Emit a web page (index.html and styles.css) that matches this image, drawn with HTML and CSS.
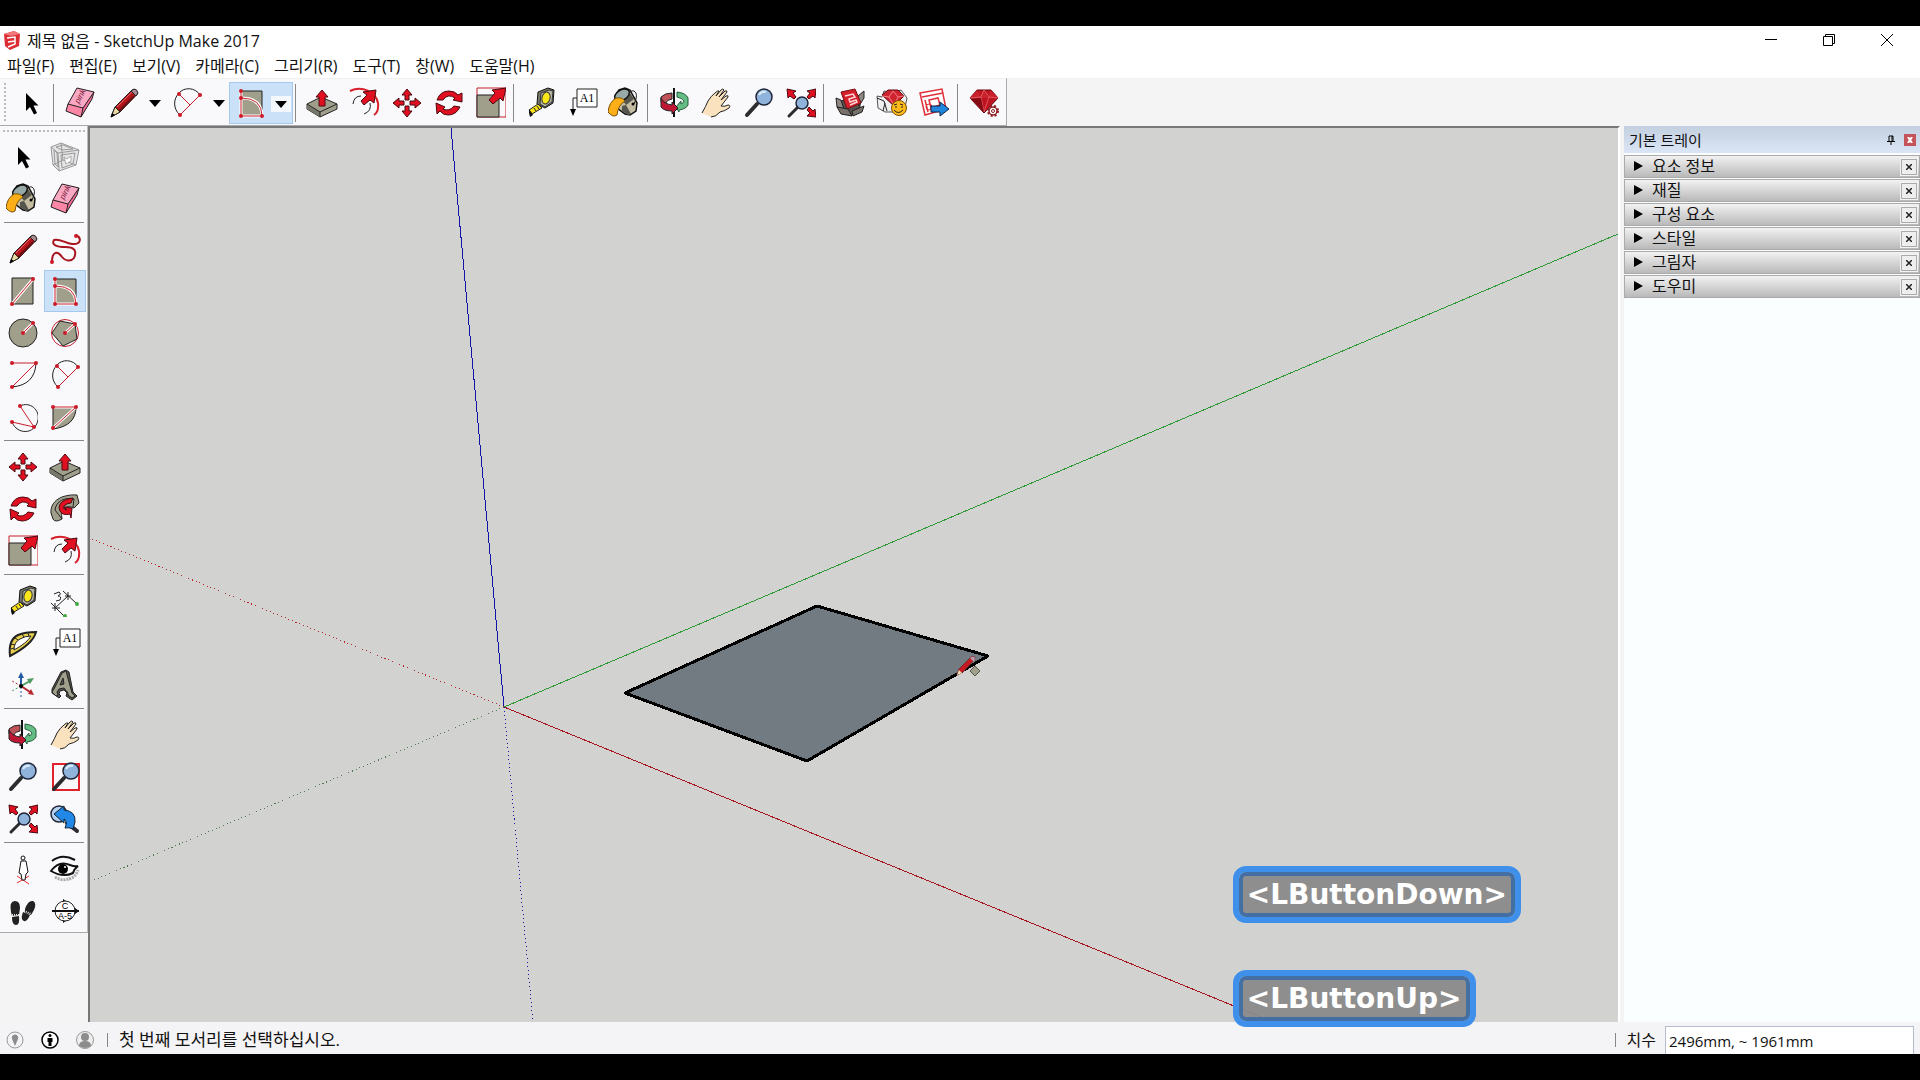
FILE: index.html
```html
<!DOCTYPE html>
<html lang="ko">
<head>
    <meta charset="utf-8">
    <title>제목 없음 - SketchUp Make 2017</title>
    <link rel="stylesheet" href="styles.css">
</head>
<body>

<!-- icon set, shared by both toolbars -->
<svg class="icon-defs" aria-hidden="true">
    <symbol id="select" viewBox="0 0 32 32"><path d="M12 6v18l4-4 4 7.500 3-1.500-3.500-7.500h5z"/></symbol>
    <symbol id="component" viewBox="0 0 32 32">
        <path d="M2 6l10-4 18 7-3 15-17 6-6-6z" fill="#e4e4e6" stroke="#9a9a9a"/>
        <path d="M2 6l7 6 21-3M9 12l1 18M12 2l2 17-10 5M14 19l13 5M5 9l3 3 1 14-3-3zM12 14l14-2-2 11-11 4zM14 4l10 4-11 1-6-3z" fill="none" stroke="#9a9a9a"/>
        <path d="M15 16l3 2 4-3v5l-5 3z" fill="#fff" stroke="#aaa"/>
    </symbol>
    <symbol id="eraser" viewBox="0 0 32 32">
        <path d="M13 1l17 4-2 7-11 18-15-6 2-7z" fill="#f06a94"/>
        <path d="M13 1l17 4-11 16-15-4z" fill="#f9a9c3"/>
        <path d="M4 17l15 4-2 9-15-6z" fill="#fb86a6"/>
        <path d="M13 1l17 4-2 7-11 18-15-6 2-7zM4 17l15 4 11-16M19 21l-2 9" fill="none" stroke="#222"/>
        <text x="15" y="17" transform="rotate(-62 15 17)" class="pink-mark">pink</text>
    </symbol>
    <symbol id="pencil" viewBox="0 0 32 32">
        <path d="M4 30l4-10L25 3q2-1 4 .5 2 2 1 4L13 25z" fill="#b5161c" stroke="#222"/>
        <path d="M10 20L26 4" stroke="#e8646a" stroke-width="1"/>
        <path d="M12 24l15-15" stroke="#6e0d12" stroke-width="2"/>
        <path d="M4 30l4-10 5 5z" fill="#e9d9a5" stroke="#222"/>
        <path d="M4 30l1-4 3 2z"/>
        <path d="M24 4l5 5 2-3q-1-4-4-4z" fill="#a78b91" stroke="#222"/>
    </symbol>
    <symbol id="freehand" viewBox="0 0 32 32">
        <path d="M27 2C33 5 32 12 23 11 16 10 10 5 5 7 2 12 8 14 16 14 26 14 28 18 25 25 22 29 16 28 13 24 8 17 3 19 3 29" fill="none" stroke="#a8141f" stroke-width="2"/>
        <circle cx="27" cy="3" r="2" class="node"/><circle cx="3" cy="29" r="2" class="node"/>
    </symbol>
    <symbol id="rectangle" viewBox="0 0 32 32">
        <path d="M6 3h21v26h-21z" class="stone"/>
        <path d="M6 29l21-25" class="halo"/><path d="M6 29l21-25" class="red"/>
        <circle cx="27" cy="4" r="2" class="node"/><circle cx="6" cy="29" r="2" class="node"/>
    </symbol>
    <symbol id="rotated" viewBox="0 0 32 32">
        <path d="M6 4h21v25h-21z" class="stone"/>
        <path d="M6 4v25h21Q27 11 6 11" class="halo"/><path d="M6 4v25h21Q27 11 6 11" class="red"/>
        <circle cx="6" cy="4" r="2" class="node"/><circle cx="6" cy="11" r="2" class="node"/><circle cx="6" cy="29" r="2" class="node"/><circle cx="27" cy="29" r="2" class="node"/>
    </symbol>
    <symbol id="circle" viewBox="0 0 32 32">
        <circle cx="17" cy="16" r="14" class="stone"/>
        <path d="M17 16l10-10" class="halo"/><path d="M17 16l10-10" class="red"/>
        <circle cx="17" cy="16" r="2" class="node"/><circle cx="27" cy="6" r="2" class="node"/>
    </symbol>
    <symbol id="polygon" viewBox="0 0 32 32">
        <circle cx="16" cy="16" r="13.500" class="red"/>
        <path d="M11 4l15 3 2 15-14 7-11-13z" class="stone"/>
        <path d="M16 16l10-9" class="halo"/><path d="M16 16l10-9" class="red"/>
        <circle cx="16" cy="16" r="2" class="node"/><circle cx="26" cy="7" r="2" class="node"/>
    </symbol>
    <symbol id="arc" viewBox="0 0 32 32">
        <path d="M30 4Q29 26 6 28" class="ink"/>
        <path d="M6 4h24L6 28" class="red"/>
        <circle cx="6" cy="4" r="2" class="node"/><circle cx="30" cy="4" r="2" class="node"/><circle cx="6" cy="28" r="2" class="node"/>
    </symbol>
    <symbol id="arc2" viewBox="0 0 32 32">
        <path d="M29 8C24 0 13 0 8 6 2 12 2 22 9 28" class="ink"/>
        <path d="M29 8L9 28M8 7l11 11" class="red"/>
        <circle cx="8" cy="7" r="2" class="node"/><circle cx="29" cy="8" r="2" class="node"/><circle cx="9" cy="28" r="2" class="node"/>
    </symbol>
    <symbol id="arc3" viewBox="0 0 32 32">
        <path d="M14 5C24 0 34 9 32 19 29 34 11 34 6 21" class="ink"/>
        <path d="M14 5l14 21-22-5" class="red"/>
        <circle cx="14" cy="5" r="2" class="node"/><circle cx="6" cy="21" r="2" class="node"/><circle cx="28" cy="26" r="2" class="node"/>
    </symbol>
    <symbol id="pie" viewBox="0 0 32 32">
        <path d="M4 6h23Q27 25 4 28z" class="stone"/>
        <path d="M4 6h23L4 27" class="halo"/><path d="M4 6h23L4 27" class="red"/>
        <circle cx="4" cy="6" r="2" class="node"/><circle cx="27" cy="6" r="2" class="node"/><circle cx="4" cy="27" r="2" class="node"/>
    </symbol>
    <symbol id="move" viewBox="0 0 32 32">
        <path d="M17 2l5 6h-3v5h-4V8h-3zM17 30l5-6h-3v-5h-4v5h-3zM3 16l6-5v3h5v4H9v3zM31 16l-6-5v3h-5v4h5v3z" class="arrow"/>
    </symbol>
    <symbol id="pushpull" viewBox="0 0 32 32">
        <path d="M1 17l14-7 16 7v5l-17 8L1 22z" class="stone"/>
        <path d="M1 18v4l13 8v-5z" fill="#77776b"/>
        <path d="M1 17l13 8 17-8M14 25v5" class="ink"/>
        <path d="M16 3l6 7h-3v9h-6v-9h-3z" class="arrow"/>
    </symbol>
    <symbol id="rotate" viewBox="0 0 32 32">
        <path d="M5 13Q8 4 17 4 23 4 26 8l4-2v9l-9-2 2-2Q16 6 11 13z" class="arrow"/>
        <path d="M28 20Q24 28 16 28 11 28 8 24l-3 3-1-11 9 4-2 2Q17 25 22 19z" class="arrow"/>
    </symbol>
    <symbol id="followme" viewBox="0 0 32 32">
        <path d="M2 20C1 8 13 1 28 2l2 8-5 5C17 11 11 16 13 26q-7 4-9 0z" class="stone"/>
        <path d="M6 17C7 8 16 4 25 6l-1 8M13 26q-3-4-7-9" class="ink"/>
        <path d="M24 5C13 6 8 12 11 18q3 5 10 3l1 4 1-10-8-1 3 3q-5-1-3-4 3-3 7-3z" class="arrow"/>
    </symbol>
    <symbol id="scale" viewBox="0 0 32 32">
        <path d="M3 1h29v29H3z" class="red"/><path d="M3 8h22v22H3z" class="stone"/>
        <path d="M32 1l-3 13-3-3-7 6-4-4 6-7-3-3z" class="arrow"/>
    </symbol>
    <symbol id="offset" viewBox="0 0 32 32">
        <path d="M2 4C14-2 28 5 30 16q1 9-4 12" fill="none" stroke="#d8202a" stroke-width="2"/>
        <path d="M5 17Q6 9 13 9M22 16q2 8-6 11" class="ink"/>
        <path d="M28 3l-2 13-4-3-6 5-3-4 6-6-4-3z" class="arrow"/>
    </symbol>
    <symbol id="tape" viewBox="0 0 32 32">
        <path d="M14 5l10-4 6 2-1 13-8 5-8-4z" fill="#77776b" stroke="#111"/>
        <path d="M17 6l8-3 4 1-1 11-7 5-5-3z" fill="#b7b6a4" stroke="#333"/>
        <ellipse cx="22" cy="11" rx="4" ry="6" transform="rotate(15 22 11)" fill="#fbe61c" stroke="#333"/>
        <path d="M5 23l9-6 4 4-10 6z" fill="#f7e01a" stroke="#222"/><path d="M5 22l4 6-3 2-1-4z" fill="#111"/>
        <path d="M10 21l2 3M13 19l2 3" class="ink"/>
    </symbol>
    <symbol id="dimension" viewBox="0 0 32 32">
        <path d="M6 23L19 11M2 18l14 14M14 6l13 12M3 23h8M16 11h6M6 18v8M19 7v8" class="ink"/>
        <path d="M5 9l5-2q3 2-1 4 4 0 2 4l-4 1" class="ink"/>
        <circle cx="16" cy="31" r="2" fill="#4a4"/><circle cx="28" cy="19" r="2" fill="#4a4"/>
    </symbol>
    <symbol id="protractor" viewBox="0 0 32 32">
        <path d="M4 29Q2 13 12 8 19 5 30 5q-3 12-26 24z" fill="#e8cf4e" stroke="#222" stroke-width="2"/>
        <path d="M8 23Q8 15 14 12q5-3 11-3-4 7-17 14z" fill="#fff" stroke="#222"/>
        <path d="M5 22l3-1M5 17l4 1M9 11l3 2M16 7l2 3M22 6l1 3" class="ink"/>
    </symbol>
    <symbol id="label" viewBox="0 0 32 32">
        <path d="M11 2h20v18H11z" fill="#fff" stroke="#222"/><path d="M11 11H7v13" class="ink"/><path d="M4 22h6l-3 7z"/>
        <text x="21" y="15" class="icon-text">A1</text>
    </symbol>
    <symbol id="axes" viewBox="0 0 32 32">
        <path d="M15 19V7" stroke="#235ba2" stroke-width="2"/><path d="M15 3l3 6h-6z" fill="#235ba2"/>
        <path d="M15 17l9-5" stroke="#4d9a5f" stroke-width="2"/><path d="M28 9l-7 1 3 5z" fill="#4d9a5f"/>
        <path d="M15 17l9 6" stroke="#b7272d" stroke-width="2"/><path d="M28 26l-3-6-3 5z" fill="#b7272d"/>
        <path d="M15 17L6 12" stroke="#b7272d" stroke-dasharray="2 2"/><path d="M15 17l-9 5" stroke="#4d9a5f" stroke-dasharray="2 2"/><path d="M15 18v10" stroke="#235ba2" stroke-dasharray="2 2"/>
        <circle cx="15" cy="17" r="2"/>
    </symbol>
    <symbol id="text3d" viewBox="0 0 32 32">
        <path d="M3 20L12 3l5-2 3 2 4 20 4 4-5 4-6-4 1-3-3-3-4 1-1 3 2 2-2 2-7-5z" fill="#55554c" stroke="#222"/>
        <path d="M5 20L13 4l4-2 6 22 3 3-3 2-4-3v-2l-4-5-5 1-2 3 1 3-2 1-4-4zM11 16l4-1-1-6z" class="stone"/>
    </symbol>
    <symbol id="orbit" viewBox="0 0 32 32">
        <path d="M3 15V10Q7 6 14 6v6q-6 1-6 4z" fill="#bf5358" stroke="#222"/>
        <path d="M19 5q9 1 11 6v7q-2 4-9 5v2l-3-5 5-6v3q3-1 3-3-2-3-7-4z" fill="#65bd86" stroke="#255c39"/>
        <path d="M16 1v29" stroke="#111" stroke-width="2"/>
        <path d="M3 11v9q3 4 11 4v3l6-6-6-6v3Q6 17 3 11z" fill="#bd1733" stroke="#222"/>
    </symbol>
    <symbol id="pan" viewBox="0 0 32 32">
        <path d="M2 26Q6 19 8 14 11 9 15 6q3-3 4-2l-3 5 5-6q2-2 3 0l-5 7 6-6q2-1 2 1l-6 8 5-4q3-1 2 1l-7 9q4 1 7-1 3 0 1 3-4 3-9 4-4 5-9 5z" fill="#f9e2bd"/>
        <path d="M2 26Q6 19 8 14 11 9 15 6q3-3 4-2l-3 5 5-6q2-2 3 0l-5 7 6-6q2-1 2 1l-6 8 5-4q3-1 2 1l-7 9q4 1 7-1 3 0 1 3-4 3-9 4-4 5-9 5" class="ink"/>
    </symbol>
    <symbol id="zoom" viewBox="0 0 32 32">
        <path d="M5 28l10-11" stroke="#2c2c2e" stroke-width="4" stroke-linecap="round"/>
        <circle cx="22" cy="10" r="8" fill="#8fb3da" stroke="#20263a" stroke-width="1.500"/>
        <path d="M17 8q2-4 7-3" fill="none" stroke="#dcebfa" stroke-width="2"/>
    </symbol>
    <symbol id="zoomwin" viewBox="0 0 32 32">
        <path d="M4 3h26v26H4z" fill="none" stroke="#e0232b" stroke-width="2"/><use href="#zoom"/>
    </symbol>
    <symbol id="extents" viewBox="0 0 32 32">
        <path d="M5 29l9-9" stroke="#2c2c2e" stroke-width="3" stroke-linecap="round"/>
        <circle cx="18" cy="16" r="6" fill="#8fb3da" stroke="#20263a" stroke-width="1.500"/>
        <path d="M3 2l9 2-3 2 3 4-2 2-4-3-2 2zM32 2l-9 2 3 2-3 4 2 2 4-3 2 2zM32 30l-9-1 3-3-3-3 2-3 4 4 2-2z" class="arrow"/>
    </symbol>
    <symbol id="previous" viewBox="0 0 32 32">
        <circle cx="10" cy="11" r="8" fill="#b4d2ef" stroke="#20263a" stroke-width="1.500"/>
        <path d="M18 20l10 8" stroke="#2c2c2e" stroke-width="4" stroke-linecap="round"/>
        <path d="M5 11l10-8v4q12 1 11 12l-2 7q-4-2-8-1 3-7-1-9v4z" fill="#2188e8" stroke="#123"/>
    </symbol>
    <symbol id="position" viewBox="0 0 32 32">
        <path d="M11 23l12 8M11 30l12-7" stroke="#e33" fill="none"/>
        <circle cx="17" cy="5" r="2" fill="#fff" stroke="#111"/>
        <path d="M15 8h5l2 11-2 2-1 6h-3l-1-6-2-1z" fill="#fff" stroke="#111"/>
    </symbol>
    <symbol id="look" viewBox="0 0 32 32">
        <path d="M20 26q7-2 9-9M6 24q8 5 15 1" stroke="#aaa" stroke-width="3" stroke-dasharray="2 1" fill="none"/>
        <path d="M3 8Q13 0 26 7" stroke="#111" stroke-width="2" fill="none"/>
        <path d="M2 18Q10 7 21 12q5 2 8 1-4 3-5 7-10 5-22-2z" fill="#fff" stroke="#111" stroke-width="2"/>
        <circle cx="14" cy="16" r="5"/><circle cx="16" cy="14" r="1" fill="#fff"/>
    </symbol>
    <symbol id="walk" viewBox="0 0 32 32">
        <path d="M5 17Q3 6 9 6q5 0 5 7l-1 7-7 1z" fill="#222"/><path d="M6 22l7-1q1 9-3 9-4 0-4-8z" fill="#222"/>
        <path d="M19 14q3-9 8-8 4 2 1 9l-3 5-6-2z" fill="#222"/><path d="M17 17l7 3q-3 7-6 6-4-1-1-9z" fill="#222"/>
        <path d="M6 20h7M18 16l7 3" stroke="#ddd" stroke-width="2" stroke-dasharray="1 1"/>
    </symbol>
    <symbol id="section" viewBox="0 0 32 32">
        <path d="M14 4l16 12-16 12z"/><circle cx="16" cy="16" r="10" fill="#fff" stroke="#222"/><path d="M3 16h27" stroke="#111" stroke-width="2"/>
        <text x="16" y="14" class="icon-small">C</text><text x="16" y="24" class="icon-small">A-5</text>
    </symbol>
    <symbol id="paint" viewBox="0 0 32 32">
        <path d="M7 9l4-6 6-2 5 2 7 13-1 8-6 4-5-1-8-6z" fill="#c5bda2" stroke="#111" stroke-width="1.500"/>
        <path d="M13 11l9-5 4 6-8 6zM14 19l4-1 5 9-3 1-6-4z" fill="#55554d"/>
        <ellipse cx="14" cy="8" rx="8" ry="5" transform="rotate(-30 14 8)" fill="#97aaa8" stroke="#111" stroke-width="1.500"/>
        <path d="M21 8q1-5 5-4 5 3 0 13" class="ink"/><circle cx="25" cy="17" r="1.500"/>
        <path d="M8 11Q1 15 0 25q5 6 9 3 1-10 8-14-3-4-9-3z" fill="#fbae18" stroke="#7a5208"/>
    </symbol>
    <symbol id="warehouse" viewBox="0 0 32 32">
        <path d="M6 14l20-3v12l-8 5-11-2z" fill="#57504d" stroke="#222"/>
        <path d="M2 11l5 2 3 9-7-2zM24 9l6-5v7l-5 8z" fill="#8f8782" stroke="#222"/>
        <path d="M7 5l14-3 6 14-14 6z" fill="#d5202b" stroke="#7a0d14"/>
        <path d="M11 9l8-2 2 3-6 2 1 3 6-2 1 2-7 3" fill="none" stroke="#fbd5d7" stroke-width="1.500"/>
        <path d="M3 20l11 2 4 7-11-2zM18 24l12-5-2 6-9 4z" fill="#77706b" stroke="#222"/>
    </symbol>
    <symbol id="extension" viewBox="0 0 32 32">
        <path d="M1 9l5 1 2-6 8 2 9-3 6 8-3 14H9L2 21z" fill="#f0f0f0" stroke="#555"/>
        <path d="M6 8l6-5h10l6 6-10 10z" fill="#cf2430" stroke="#5c0b11"/><path d="M6 9l7 1 4-6 5 6 6-1M13 10l5 8 4-8" fill="none" stroke="#f27d83"/>
        <path d="M1 11l7 3 3 10M9 16l-2 8" class="ink"/>
        <circle cx="23" cy="21" r="7.500" fill="#fcbb1b" stroke="#7e5000"/><path d="M18 18l3-1M24 17l3 1M18 23q4 5 9 0" class="ink"/><path d="M19 20h2M25 20h2" class="ink"/>
    </symbol>
    <symbol id="layout" viewBox="0 0 32 32">
        <path d="M2 6l22-4 4 20-21 6z" fill="#fff" stroke="#e1303a" stroke-width="1.500"/>
        <path d="M4 10l21-4M7 13l3 12M11 13l9-2 2 7-9 3z" fill="none" stroke="#e1303a" stroke-width="1.500"/><circle cx="11" cy="20" r="3" fill="none" stroke="#e1303a"/>
        <path d="M13 19h9v-4l9 7-9 7v-4h-9z" fill="#2186dd" stroke="#124"/>
    </symbol>
    <symbol id="ruby" viewBox="0 0 32 32">
        <path d="M2 11l7-8h14l7 8-14 15z" fill="#bd1420" stroke="#5c0b11"/>
        <path d="M9 3l4 7 3-7 4 7 3-7 7 8H2zM13 10l3 15" fill="#c9222c"/><path d="M2 11l11-1 3-7 5 7 9 1M13 10l3 15 5-15" fill="none" stroke="#e0565d"/>
        <path d="M13 11l3 14-13-13z" fill="#850b14"/>
        <circle cx="25" cy="24" r="4" fill="#fff" stroke="#8e1c22" stroke-width="1.500"/><circle cx="25" cy="24" r="5" fill="none" stroke="#8e1c22" stroke-width="2" stroke-dasharray="2 2"/><circle cx="25" cy="24" r="1.500" fill="none" stroke="#8e1c22"/>
    </symbol>
</svg>

<header>
    <div class="title-bar">
        <svg class="app-logo" viewBox="0 0 18 20" aria-hidden="true">
            <path d="M1 4L11 1l6 3-1 12-9 4-5-4z" fill="#dc2d34"/><path d="M1 4l10-3 6 3-9 2z" fill="#f2777a"/>
            <path d="M4 8l8-1v7l-7 3M5 12l7-1" fill="none" stroke="#fff" stroke-width="1.500"/>
        </svg>
        <h1>제목 없음 - SketchUp Make 2017</h1>
        <div class="window-controls">
            <button aria-label="최소화"><svg viewBox="0 0 12 12"><path d="M0 5.500h12"/></svg></button>
            <button aria-label="이전 크기로"><svg viewBox="0 0 12 12"><path d="M.5 2.500h9v9h-9zM2.500 2V.5h9v9H10"/></svg></button>
            <button aria-label="닫기"><svg viewBox="0 0 12 12"><path d="M0 0l12 12M12 0L0 12"/></svg></button>
        </div>
    </div>
    <nav class="menu-bar">
        <button>파일(F)</button>
        <button>편집(E)</button>
        <button>보기(V)</button>
        <button>카메라(C)</button>
        <button>그리기(R)</button>
        <button>도구(T)</button>
        <button>창(W)</button>
        <button>도움말(H)</button>
    </nav>
</header>

<div class="toolbar-row">
    <div class="toolbar">
        <span class="grip"></span>
        <button class="tool" aria-label="선택"><svg><use href="#select"/></svg></button>
        <span class="divider"></span>
        <button class="tool" aria-label="지우개"><svg><use href="#eraser"/></svg></button>
        <div class="split">
            <button class="tool" aria-label="선"><svg><use href="#pencil"/></svg></button>
            <button class="more" aria-label="선 도구 더 보기"></button>
        </div>
        <div class="split">
            <button class="tool" aria-label="호"><svg><use href="#arc2"/></svg></button>
            <button class="more" aria-label="호 도구 더 보기"></button>
        </div>
        <div class="split active">
            <button class="tool" aria-label="회전된 직사각형"><svg><use href="#rotated"/></svg></button>
            <button class="more" aria-label="도형 더 보기"></button>
        </div>
        <span class="divider"></span>
        <button class="tool" aria-label="밀기/끌기"><svg><use href="#pushpull"/></svg></button>
        <button class="tool" aria-label="오프셋"><svg><use href="#offset"/></svg></button>
        <button class="tool" aria-label="이동"><svg><use href="#move"/></svg></button>
        <button class="tool" aria-label="회전"><svg><use href="#rotate"/></svg></button>
        <button class="tool" aria-label="배율"><svg><use href="#scale"/></svg></button>
        <span class="divider"></span>
        <button class="tool" aria-label="줄자"><svg><use href="#tape"/></svg></button>
        <button class="tool" aria-label="텍스트"><svg><use href="#label"/></svg></button>
        <button class="tool" aria-label="페인트 통"><svg><use href="#paint"/></svg></button>
        <span class="divider"></span>
        <button class="tool" aria-label="궤도"><svg><use href="#orbit"/></svg></button>
        <button class="tool" aria-label="이동 보기"><svg><use href="#pan"/></svg></button>
        <button class="tool" aria-label="확대/축소"><svg><use href="#zoom"/></svg></button>
        <button class="tool" aria-label="범위 확대/축소"><svg><use href="#extents"/></svg></button>
        <span class="divider"></span>
        <button class="tool" aria-label="3D Warehouse"><svg><use href="#warehouse"/></svg></button>
        <button class="tool" aria-label="Extension Warehouse"><svg><use href="#extension"/></svg></button>
        <button class="tool" aria-label="LayOut"><svg><use href="#layout"/></svg></button>
        <span class="divider"></span>
        <button class="tool" aria-label="확장 관리자"><svg><use href="#ruby"/></svg></button>
    </div>
</div>

<main>
    <aside class="tool-set">
        <span class="grip-top"></span>
        <div class="tool-group">
            <button class="tool" aria-label="선택"><svg><use href="#select"/></svg></button>
            <button class="tool" aria-label="구성 요소 만들기"><svg><use href="#component"/></svg></button>
            <button class="tool" aria-label="페인트 통"><svg><use href="#paint"/></svg></button>
            <button class="tool" aria-label="지우개"><svg><use href="#eraser"/></svg></button>
        </div>
        <div class="tool-group">
            <button class="tool" aria-label="선"><svg><use href="#pencil"/></svg></button>
            <button class="tool" aria-label="자유형"><svg><use href="#freehand"/></svg></button>
            <button class="tool" aria-label="직사각형"><svg><use href="#rectangle"/></svg></button>
            <button class="tool active" aria-label="회전된 직사각형"><svg><use href="#rotated"/></svg></button>
            <button class="tool" aria-label="원"><svg><use href="#circle"/></svg></button>
            <button class="tool" aria-label="다각형"><svg><use href="#polygon"/></svg></button>
            <button class="tool" aria-label="호"><svg><use href="#arc"/></svg></button>
            <button class="tool" aria-label="2점 호"><svg><use href="#arc2"/></svg></button>
            <button class="tool" aria-label="3점 호"><svg><use href="#arc3"/></svg></button>
            <button class="tool" aria-label="파이"><svg><use href="#pie"/></svg></button>
        </div>
        <div class="tool-group">
            <button class="tool" aria-label="이동"><svg><use href="#move"/></svg></button>
            <button class="tool" aria-label="밀기/끌기"><svg><use href="#pushpull"/></svg></button>
            <button class="tool" aria-label="회전"><svg><use href="#rotate"/></svg></button>
            <button class="tool" aria-label="따라가기"><svg><use href="#followme"/></svg></button>
            <button class="tool" aria-label="배율"><svg><use href="#scale"/></svg></button>
            <button class="tool" aria-label="오프셋"><svg><use href="#offset"/></svg></button>
        </div>
        <div class="tool-group">
            <button class="tool" aria-label="줄자"><svg><use href="#tape"/></svg></button>
            <button class="tool" aria-label="치수"><svg><use href="#dimension"/></svg></button>
            <button class="tool" aria-label="각도기"><svg><use href="#protractor"/></svg></button>
            <button class="tool" aria-label="텍스트"><svg><use href="#label"/></svg></button>
            <button class="tool" aria-label="축"><svg><use href="#axes"/></svg></button>
            <button class="tool" aria-label="3D 텍스트"><svg><use href="#text3d"/></svg></button>
        </div>
        <div class="tool-group">
            <button class="tool" aria-label="궤도"><svg><use href="#orbit"/></svg></button>
            <button class="tool" aria-label="이동 보기"><svg><use href="#pan"/></svg></button>
            <button class="tool" aria-label="확대/축소"><svg><use href="#zoom"/></svg></button>
            <button class="tool" aria-label="창 확대/축소"><svg><use href="#zoomwin"/></svg></button>
            <button class="tool" aria-label="범위 확대/축소"><svg><use href="#extents"/></svg></button>
            <button class="tool" aria-label="이전"><svg><use href="#previous"/></svg></button>
        </div>
        <div class="tool-group">
            <button class="tool" aria-label="카메라 배치"><svg><use href="#position"/></svg></button>
            <button class="tool" aria-label="둘러보기"><svg><use href="#look"/></svg></button>
            <button class="tool" aria-label="걷기"><svg><use href="#walk"/></svg></button>
            <button class="tool" aria-label="단면"><svg><use href="#section"/></svg></button>
        </div>
    </aside>

    <section class="viewport">
        <svg class="scene" viewBox="90 128 1528 894" preserveAspectRatio="xMinYMin slice">
            <g class="axis">
                <path d="M504 707L451 128" stroke="#1414a8"/>
                <path d="M504 707L1618 234" stroke="#2f9a35"/>
                <path d="M504 707L1273 1022" stroke="#a8141f"/>
            </g>
            <g class="axis" stroke-dasharray="1 3">
                <path d="M504 707L533 1022" stroke="#1414a8"/>
                <path d="M504 707L92 881" stroke="#4f7a50"/>
                <path d="M504 707L92 539" stroke="#b8232c"/>
            </g>
            <path class="face" d="M817 606l171 50-181 105-182-68z"/>
            <!-- pencil cursor with the rotated rectangle hint -->
            <path d="M957 675l2-6 12-12q4-2 4 2l-12 13z" fill="#c81a22" stroke="#7a2a2c"/>
            <path d="M957 675l2-5 3 3z" fill="#f2e2b8"/>
            <path d="M970 658l4 4 1-4q-2-3-5 0z" fill="#b59aa8"/>
            <path d="M975 666l5 5-5 5-5-5z" fill="#a09f8c" stroke="#54544a"/>
        </svg>
        <div class="key-log">
            <span>&lt;LButtonDown&gt;</span>
            <span>&lt;LButtonUp&gt;</span>
        </div>
    </section>

    <aside class="tray">
        <div class="tray-header">
            <h2>기본 트레이</h2>
            <button class="pin" aria-label="고정"><svg viewBox="0 0 8 10"><path d="M2 6V1h4v5M5 1v5M0 6.500h8M4 7v3"/></svg></button>
            <button class="tray-close" aria-label="트레이 닫기"><svg viewBox="0 0 6 6"><path d="M1 0l4 6M5 0L1 6"/></svg></button>
        </div>
        <div class="panel"><button class="panel-title">요소 정보</button><button class="panel-close" aria-label="요소 정보 닫기"><svg viewBox="0 0 6 6"><path d="M0 0l6 6M6 0L0 6"/></svg></button></div>
        <div class="panel"><button class="panel-title">재질</button><button class="panel-close" aria-label="재질 닫기"><svg viewBox="0 0 6 6"><path d="M0 0l6 6M6 0L0 6"/></svg></button></div>
        <div class="panel"><button class="panel-title">구성 요소</button><button class="panel-close" aria-label="구성 요소 닫기"><svg viewBox="0 0 6 6"><path d="M0 0l6 6M6 0L0 6"/></svg></button></div>
        <div class="panel"><button class="panel-title">스타일</button><button class="panel-close" aria-label="스타일 닫기"><svg viewBox="0 0 6 6"><path d="M0 0l6 6M6 0L0 6"/></svg></button></div>
        <div class="panel"><button class="panel-title">그림자</button><button class="panel-close" aria-label="그림자 닫기"><svg viewBox="0 0 6 6"><path d="M0 0l6 6M6 0L0 6"/></svg></button></div>
        <div class="panel"><button class="panel-title">도우미</button><button class="panel-close" aria-label="도우미 닫기"><svg viewBox="0 0 6 6"><path d="M0 0l6 6M6 0L0 6"/></svg></button></div>
    </aside>
</main>

<footer class="status-bar">
    <button class="status-icon" aria-label="위치 정보"><svg viewBox="0 0 20 20"><circle cx="10" cy="10" r="8" fill="none" stroke="#999"/><path d="M10 16L7 9q-1-4 3-4.500 4 .5 3 4.500z" fill="#8c8c8c"/></svg></button>
    <button class="status-icon" aria-label="크레딧"><svg viewBox="0 0 20 20"><circle cx="10" cy="10" r="8" fill="#fff" stroke="#000" stroke-width="1.500"/><circle cx="10" cy="5.500" r="1.500"/><path d="M7.500 8h5v4h-1v4h-3v-4h-1z"/></svg></button>
    <button class="status-icon" aria-label="로그인"><svg viewBox="0 0 20 20"><circle cx="10" cy="10" r="8.500" fill="#eee" stroke="#999"/><circle cx="10" cy="7" r="4" fill="#8c8c8c"/><path d="M4 16q0-5 6-5t6 5q-6 4-12 0z" fill="#8c8c8c"/></svg></button>
    <p class="hint">첫 번째 모서리를 선택하십시오.</p>
    <label for="measure">치수</label>
    <input id="measure" type="text" value="2496mm, ~ 1961mm">
</footer>

</body>
</html>
```

FILE: styles.css
```css
* { box-sizing: border-box; }
body { display: flex; flex-direction: column; height: 100vh; margin: 0; padding: 26px 0; background: #000; color: #111; font-family: "Open Sans", "Noto Sans CJK KR", sans-serif; font-size: 16px; }
h1, h2, p { margin: 0; font-size: 16px; font-weight: normal; }
button { padding: 0; border: 0; background: none; color: inherit; font: inherit; }
svg { display: block; }
.icon-defs { display: none; }

/* title and menu */
header { background: #fff; }
.title-bar { display: flex; align-items: center; height: 28px; padding: 0 4px 0 3px; }
.app-logo { width: 18px; height: 20px; margin-right: 6px; }
.window-controls { display: flex; margin-left: auto; }
.window-controls button { display: flex; align-items: center; justify-content: center; width: 58px; height: 28px; }
.window-controls svg { width: 12px; height: 12px; fill: none; stroke: #000; }
.menu-bar { display: flex; gap: 15px; height: 24px; padding-left: 7px; }
.menu-bar button { line-height: 24px; }

/* toolbars */
.toolbar-row { display: flex; background: #f4f4f4; }
.toolbar { display: flex; padding: 4px 1px 1px 4px; background: #f9f8fa; border-right: 1px solid #aaa; border-bottom: 1px solid #aaa; border-top: 1px solid #f0f0f2; }
.grip { width: 2px; margin: 0 3px 2px 0; background: repeating-linear-gradient(#bbb 0 2px, transparent 2px 4px); }
.divider { width: 1px; height: 38px; margin: 1px 5px 0 2px; background: #888; }
.tool { display: flex; flex: none; align-items: center; justify-content: center; width: 42px; height: 42px; margin-top: -1px; }
.tool svg { width: 32px; height: 32px; overflow: visible; }
.split { display: flex; width: 64px; height: 42px; margin-top: -1px; }
.split .tool { flex: 1; margin: 0; }
.more { display: flex; align-items: center; justify-content: center; width: 20px; }
.more::before { content: ""; border: 6px solid transparent; border-top: 7px solid #000; border-bottom: 0; }
.active { background: #cae1f8; box-shadow: inset 0 0 0 1px #a4c9ec; }
.active .more { height: 16px; margin: 14px 2px 0 -2px; background: #f4f7fb; }

main { display: flex; flex: 1; min-height: 0; background: #f4f4f4; }
.tool-set { align-self: flex-start; width: 88px; padding: 4px 2px 0 1px; background: #f9f8fa; border-right: 1px solid #bbb; border-bottom: 1px solid #aaa; }
.grip-top { display: block; height: 2px; margin: 0 0 4px 2px; background: repeating-linear-gradient(90deg, #bbb 0 2px, transparent 2px 4px); }
.tool-group { display: grid; grid-template-columns: 42px 42px; column-gap: 1px; }
.tool-group + .tool-group::before { content: ""; grid-column: 1 / -1; height: 1px; margin: 2px 2px 5px 3px; background: #888; }
.tool-group .tool { margin: 0; }

/* icon paints */
.stone { fill: #a09f8c; stroke: #222; }
.ink { fill: none; stroke: #222; }
.red { fill: none; stroke: #c8202c; }
.halo { fill: none; stroke: #fff; stroke-width: 3px; }
.node { fill: #cc1a28; }
.arrow { fill: #e01020; stroke: #4a0a10; }
.icon-text { font: 12px "Liberation Serif", serif; text-anchor: middle; }
.icon-small { font: 9px "Liberation Sans", sans-serif; text-anchor: middle; }
.pink-mark { font: italic 8px "Liberation Sans", sans-serif; fill: #7c2040; }

/* drawing area */
.viewport { position: relative; flex: 1; min-width: 0; border-top: 2px solid #777; border-left: 2px solid #777; border-right: 2px solid #fff; background: #d2d2d0; }
.scene { width: 100%; height: 100%; }
.axis { fill: none; shape-rendering: crispEdges; }
.face { fill: #737b82; stroke: #000; stroke-width: 3px; stroke-linejoin: round; shape-rendering: crispEdges; }
.key-log { position: absolute; right: 97px; bottom: -5px; display: flex; flex-direction: column; align-items: flex-start; gap: 47px; }
.key-log span { padding: 0 8px; border: 6px solid #3f90ea; border-radius: 13px; background: rgba(138, 138, 138, .95); background-clip: padding-box; box-shadow: inset 0 0 0 4px #446fa3; color: #fff; font: bold 28px/45px "DejaVu Sans", sans-serif; }

/* tray */
.tray { width: 296px; margin-left: 4px; background: #fbfeff; }
.tray-header { display: flex; align-items: center; height: 27px; margin-bottom: 2px; padding: 0 4px 0 5px; background: linear-gradient(#c3d0e0, #dbe5f5); }
.tray-header h2 { padding-bottom: 1px; font-size: 15px; }
.pin { margin-left: auto; margin-right: 9px; }
.pin svg { width: 8px; height: 10px; fill: none; stroke: #000; }
.tray-close { display: flex; align-items: center; justify-content: center; width: 12px; height: 12px; background: #c4545a; }
.tray-close svg { width: 6px; height: 6px; stroke: #fff; stroke-width: 2px; }
.panel { display: flex; align-items: center; height: 23px; margin-bottom: 1px; padding-right: 2px; background: linear-gradient(#f2f2f2, #b9b9b9); border: 1px solid #aaa; }
.panel-title { display: flex; flex: 1; align-items: center; height: 21px; padding-left: 9px; line-height: 18px; padding-bottom: 2px; }
.panel-title::before { content: ""; margin-right: 9px; border: 5px solid transparent; border-left: 9px solid #000; border-right: 0; }
.panel-close { display: flex; align-items: center; justify-content: center; width: 16px; height: 16px; background: #eee; border: 1px solid #aaa; box-shadow: 0 0 0 1px #f4f4f4; }
.panel-close svg { width: 6px; height: 6px; stroke: #222; stroke-width: 1.5px; }

/* status bar */
.status-bar { display: flex; align-items: center; height: 32px; padding: 4px 6px 0 5px; background: #f4f3f5; }
.status-icon { margin-right: 15px; }
.status-icon svg { width: 20px; height: 20px; }
.hint { flex: 1; margin-left: -3px; padding-left: 11px; border-left: 1px solid #888; font-size: 17px; line-height: 14px; }
.status-bar label { padding: 0 9px 0 11px; border-left: 1px solid #888; line-height: 14px; }
.status-bar input { align-self: flex-end; width: 249px; height: 28px; padding: 0 3px; border: 1px solid #b4bccd; border-width: 1px 1px 0; background: #fff; color: #111; font: inherit; font-size: 15px; }
```
